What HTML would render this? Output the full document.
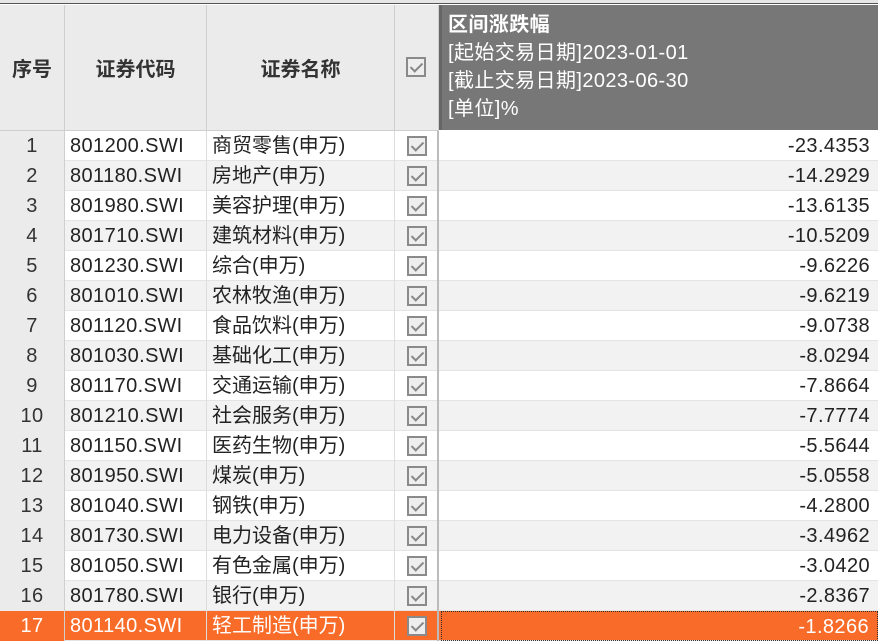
<!DOCTYPE html>
<html><head><meta charset="utf-8"><style>
*{margin:0;padding:0;box-sizing:border-box}
body{width:878px;height:638px;overflow:hidden;background:#fff;font-family:"Liberation Sans","Noto Sans CJK SC",sans-serif;color:#222;position:relative}
.top{position:absolute;left:0;top:0;width:878px;height:4px;background:#e6e6e6;border-bottom:1px solid #555}
.hd{position:absolute;top:5px;height:126px;background:#ebebeb;border-right:1px solid #cfcfcf;border-bottom:1px solid #cfcfcf;display:flex;align-items:center;justify-content:center;font-weight:bold;font-size:20px;color:#333}
.dark{position:absolute;left:439px;top:5px;width:439px;height:125px;background:#777;border-left:3px solid #666;color:#fff;font-size:20px;letter-spacing:0.4px;padding:6px 0 0 6px;line-height:28px}
.row{position:absolute;left:0;width:878px;height:30px;font-size:20px;letter-spacing:0.4px;line-height:30px;border-bottom:1px solid #e4e4e4}
.row div{position:absolute;top:0;height:30px}
.c0{left:0;width:65px;text-align:center;background:#ebebeb;border-right:1px solid #cfcfcf;color:#333}
.c1{left:65px;width:142px;padding-left:5px;border-right:1px solid #ddd}
.c2{left:207px;width:188px;padding-left:5px;border-right:1px solid #ddd;letter-spacing:0}
.c3{left:395px;width:44px;border-right:2px solid #bbb}
.c4{left:441px;width:437px;text-align:right;padding-right:8px}
.cb{position:absolute;left:12px;top:5px;width:20px;height:20px;border:2px solid #8a8a8a;background:#eee}
.cb:after{content:"";position:absolute;left:5px;top:1px;width:5px;height:10px;border:solid #888;border-width:0 2px 2px 0;transform:rotate(45deg)}
.alt{background:#f2f2f2}
.sel{background:#f96b28;color:#fff}
.sel .c0{background:#f96b28;color:#fff}
.sel .c4{border:1px dotted #333}
</style></head><body>
<div class="top"></div>
<div class="hd" style="left:0;width:65px">序号</div>
<div class="hd" style="left:65px;width:142px">证券代码</div>
<div class="hd" style="left:207px;width:188px">证券名称</div>
<div class="hd" style="left:395px;width:44px"><span class="cb" style="top:52px;left:11px"></span></div>
<div class="dark"><b>区间涨跌幅</b><br>[起始交易日期]2023-01-01<br>[截止交易日期]2023-06-30<br>[单位]%</div>
<div id="rows"></div>
<script>
var d=[["801200","商贸零售","-23.4353"],["801180","房地产","-14.2929"],["801980","美容护理","-13.6135"],["801710","建筑材料","-10.5209"],["801230","综合","-9.6226"],["801010","农林牧渔","-9.6219"],["801120","食品饮料","-9.0738"],["801030","基础化工","-8.0294"],["801170","交通运输","-7.8664"],["801210","社会服务","-7.7774"],["801150","医药生物","-5.5644"],["801950","煤炭","-5.0558"],["801040","钢铁","-4.2800"],["801730","电力设备","-3.4962"],["801050","有色金属","-3.0420"],["801780","银行","-2.8367"],["801140","轻工制造","-1.8266"]];
var h="";d.forEach(function(r,i){var cls=i==16?"row sel":(i%2?"row alt":"row");h+='<div class="'+cls+'" style="top:'+(131+i*30)+'px"><div class="c0">'+(i+1)+'</div><div class="c1">'+r[0]+'.SWI</div><div class="c2">'+r[1]+'(申万)</div><div class="c3"><span class="cb"></span></div><div class="c4">'+r[2]+'</div></div>';});
document.getElementById("rows").innerHTML=h;
</script>
</body></html>
